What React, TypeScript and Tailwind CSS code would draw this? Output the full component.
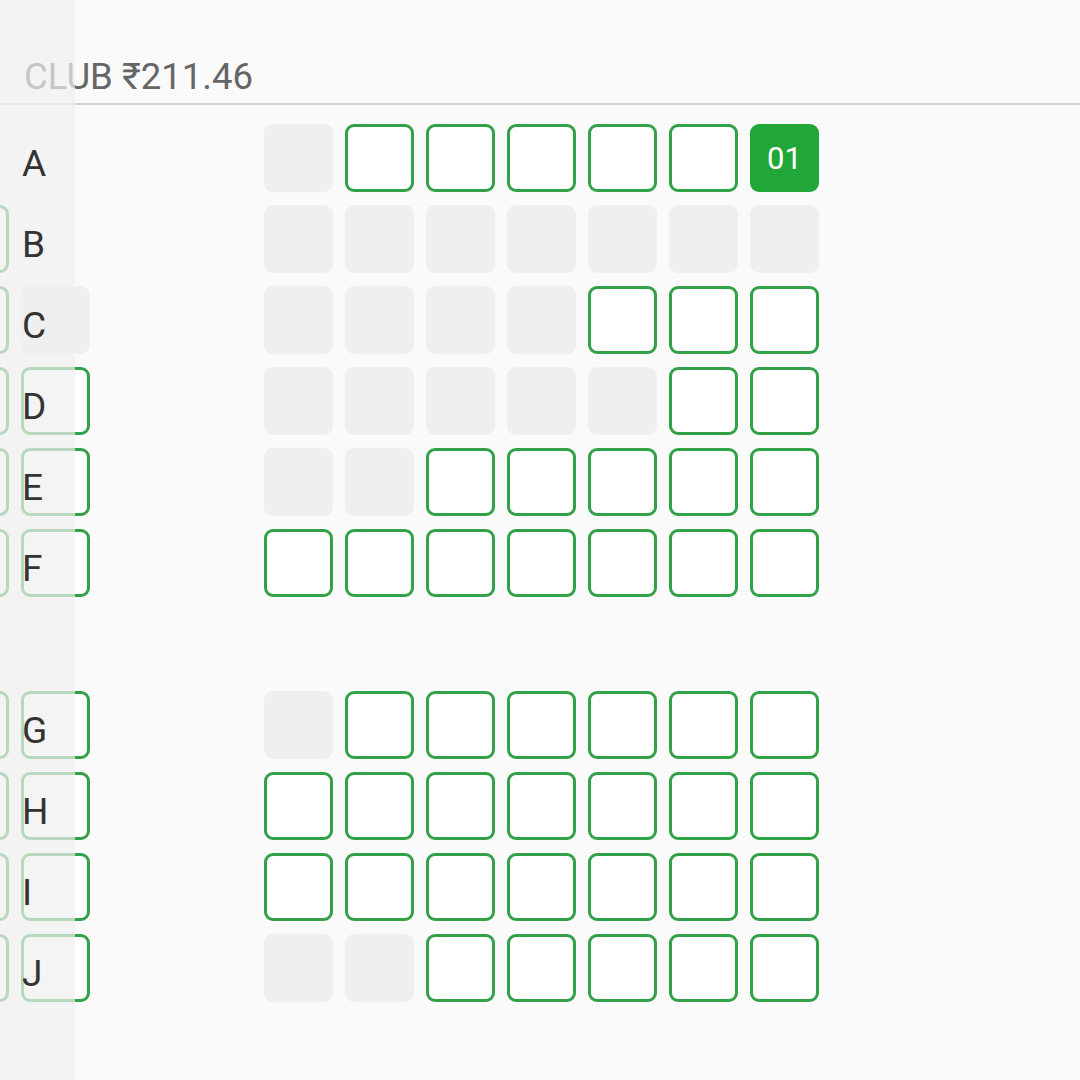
type Seat = "none" | "sold" | "open" | "picked";

const N: Seat = "none";
const S: Seat = "sold";
const O: Seat = "open";
const P: Seat = "picked";

// columns: two seats hidden under the sticky letter column, two empty aisle slots, then 7 seats
const rows: { label: string; seats: Seat[] }[] = [
  { label: "A", seats: [N, N, N, N, S, O, O, O, O, O, P] },
  { label: "B", seats: [O, N, N, N, S, S, S, S, S, S, S] },
  { label: "C", seats: [O, S, N, N, S, S, S, S, O, O, O] },
  { label: "D", seats: [O, O, N, N, S, S, S, S, S, O, O] },
  { label: "E", seats: [O, O, N, N, S, S, O, O, O, O, O] },
  { label: "F", seats: [O, O, N, N, O, O, O, O, O, O, O] },
  { label: "", seats: [] },
  { label: "G", seats: [O, O, N, N, S, O, O, O, O, O, O] },
  { label: "H", seats: [O, O, N, N, O, O, O, O, O, O, O] },
  { label: "I", seats: [O, O, N, N, O, O, O, O, O, O, O] },
  { label: "J", seats: [O, O, N, N, S, S, O, O, O, O, O] },
];

function SeatBox({ kind }: { kind: Seat }) {
  if (kind === "none") return <div className="h-[68px] w-[69px] shrink-0" />;
  if (kind === "sold")
    return <div className="h-[68px] w-[69px] shrink-0 rounded-[9px] bg-[#efefef]" />;
  if (kind === "picked")
    return (
      <div className="flex h-[68px] w-[69px] shrink-0 items-center justify-center rounded-[9px] bg-[#21a63a] pt-[2px] text-[31px] text-white">
        01
      </div>
    );
  return (
    <div className="h-[68px] w-[69px] shrink-0 rounded-[9px] border-[3px] border-[#33a148] bg-white" />
  );
}

export default function App() {
  return (
    <div
      className="relative h-screen w-full overflow-hidden bg-[#fafafa]"
      style={{ fontFamily: "Roboto, 'Noto Sans', sans-serif" }}
    >
      <div className="flex h-[105px] items-end border-b-2 border-[#d4d4d4] pb-[8px] pl-[24px] text-[36.5px] leading-none text-[#666666]">
        CLUB ₹211.46
      </div>

      <div className="ml-[-60px] flex flex-col gap-[13px] pt-[19px]">
        {rows.map((r, i) => (
          <div key={i} className="flex h-[68px] gap-[12px]">
            {r.seats.map((s, j) => (
              <SeatBox key={j} kind={s} />
            ))}
          </div>
        ))}
      </div>

      {/* sticky row-letter column over the scrolled seats */}
      <div className="absolute inset-y-0 left-0 w-[75px] bg-[#efefef]/70">
        <div className="flex flex-col gap-[13px] pt-[124px]">
          {rows.map((r, i) => (
            <div
              key={i}
              className="flex h-[68px] items-center pl-[22px] pt-[10px] text-[37px] leading-none text-[#333333]"
            >
              {r.label}
            </div>
          ))}
        </div>
      </div>
    </div>
  );
}
